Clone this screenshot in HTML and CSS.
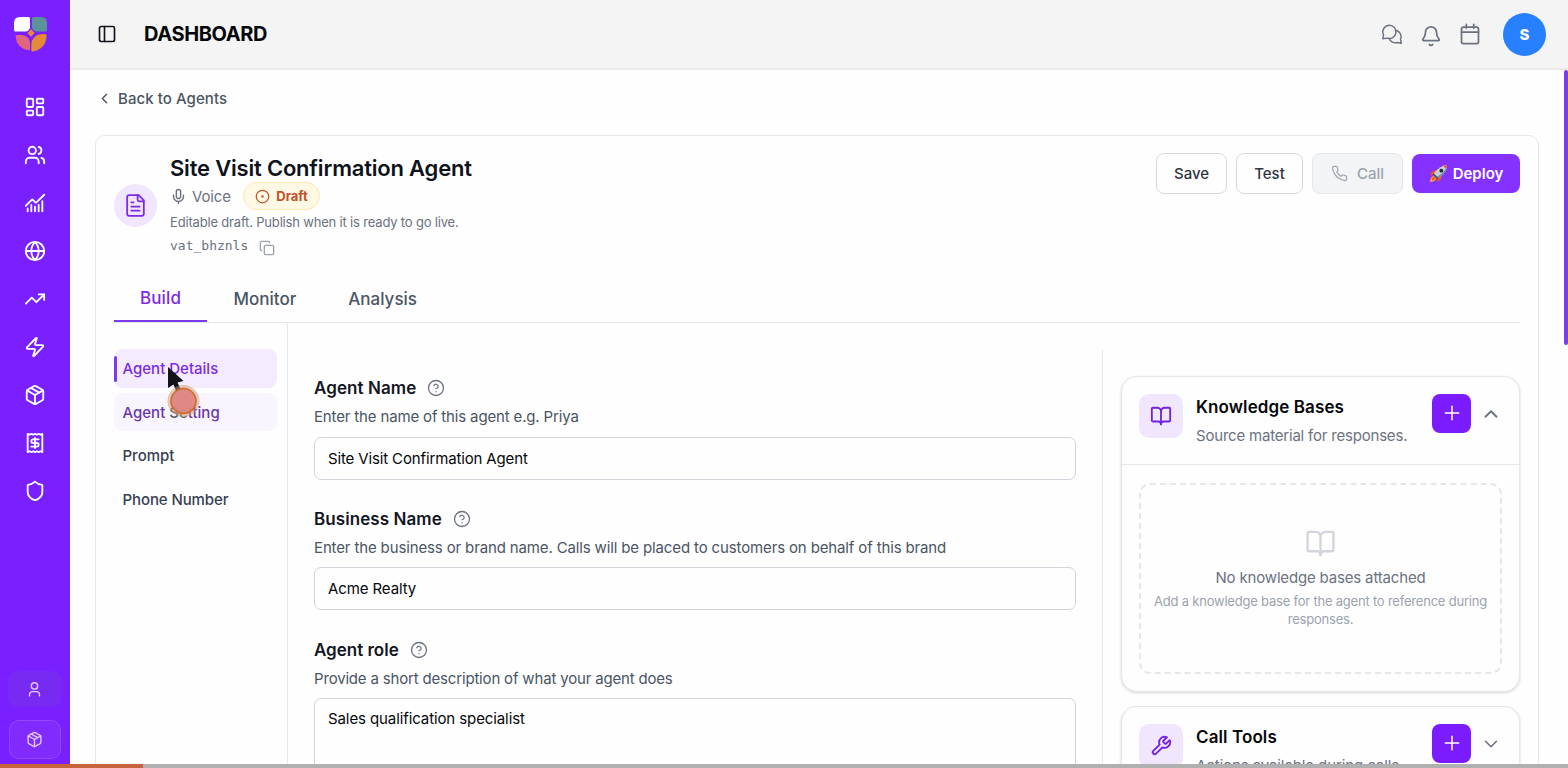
FILE: index.html
```html
<!DOCTYPE html>
<html lang="en">
<head>
<meta charset="utf-8">
<title>Dashboard</title>
<link rel="stylesheet" href="styles.css">
</head>
<body>
<svg class="defs" width="0" height="0" aria-hidden="true">
  <symbol id="box" viewBox="0 0 24 24"><path d="M11 21.73a2 2 0 0 0 2 0l7-4A2 2 0 0 0 21 16V8a2 2 0 0 0-1-1.73l-7-4a2 2 0 0 0-2 0l-7 4A2 2 0 0 0 3 8v8a2 2 0 0 0 1 1.73z"/><path d="M12 22V12"/><path d="M3.3 7 12 12l8.7-5"/><path d="m7.5 4.27 9 5.15"/></symbol>
  <symbol id="book" viewBox="0 0 24 24"><path d="M12 7v14"/><path d="M3 18a1 1 0 0 1-1-1V4a1 1 0 0 1 1-1h5a4 4 0 0 1 4 4 4 4 0 0 1 4-4h5a1 1 0 0 1 1 1v13a1 1 0 0 1-1 1h-6a3 3 0 0 0-3 3 3 3 0 0 0-3-3z"/></symbol>
  <symbol id="help" viewBox="0 0 24 24"><circle cx="12" cy="12" r="10"/><path d="M9.09 9a3 3 0 0 1 5.83 1c0 2-3 3-3 3"/><path d="M12 17h.01"/></symbol>
  <symbol id="plus" viewBox="0 0 24 24"><path d="M4 12h16M12 4v16"/></symbol>
</svg>
<div class="app">
  <aside class="sidebar">
    <svg class="logo" viewBox="0 0 34 36">
      <path fill="#fff" d="M6 0H14.500Q16 0 16 1.500V10Q16 14.500 11.500 14.500H1.500Q0 14.500 0 13V6Q0 0 6 0Z"/>
      <path fill="#5b9298" d="M19.500 0H27Q33 0 33 6V13Q33 14.500 31.500 14.500H22.500Q18 14.500 18 10V1.500Q18 0 19.500 0Z"/>
      <path fill="#e2657f" d="M3 18H8Q15.500 19 16 26V32Q16 33.500 14.500 33.300Q2.500 31 1.600 19.500Q1.600 18 3 18Z"/>
      <path fill="#e58b36" d="M31 17H28Q17.500 18 17.300 28V33Q17.300 34.700 19 34.400Q32 32 32.600 18.500Q32.600 17 31 17Z"/>
      <path fill="#e58b36" stroke="#7a1fff" stroke-width="1.200" d="M17 11.300 21.500 16 17 20.700 12.500 16Z"/>
    </svg>
    <nav class="side-nav">
      <svg class="icon" viewBox="0 0 24 24"><rect width="7" height="9" x="3" y="3" rx="1"/><rect width="7" height="5" x="14" y="3" rx="1"/><rect width="7" height="9" x="14" y="12" rx="1"/><rect width="7" height="5" x="3" y="16" rx="1"/></svg>
      <svg class="icon" viewBox="0 0 24 24"><path d="M16 21v-2a4 4 0 0 0-4-4H6a4 4 0 0 0-4 4v2"/><circle cx="9" cy="7" r="4"/><path d="M22 21v-2a4 4 0 0 0-3-3.870"/><path d="M16 3.130a4 4 0 0 1 0 7.750"/></svg>
      <svg class="icon" viewBox="0 0 24 24"><path d="M12 16v5M16 14v7M20 10v11M8 14v7M4 18v3"/><path d="m22 3-8.650 8.650a.5.5 0 0 1-.7 0L9.350 8.350a.5.5 0 0 0-.7 0L2 15"/></svg>
      <svg class="icon" viewBox="0 0 24 24"><circle cx="12" cy="12" r="10"/><path d="M12 2a14.500 14.500 0 0 0 0 20 14.500 14.500 0 0 0 0-20"/><path d="M2 12h20"/></svg>
      <svg class="icon" viewBox="0 0 24 24"><path d="M22 7 13.500 15.500 8.500 10.500 2 17"/><path d="M16 7h6v6"/></svg>
      <svg class="icon" viewBox="0 0 24 24"><path d="M4 14a1 1 0 0 1-.78-1.630l9.900-10.200a.5.5 0 0 1 .86.46l-1.920 6.020A1 1 0 0 0 13 10h7a1 1 0 0 1 .78 1.630l-9.900 10.200a.5.5 0 0 1-.86-.46l1.920-6.020A1 1 0 0 0 11 14z"/></svg>
      <svg class="icon"><use href="#box"/></svg>
      <svg class="icon" viewBox="0 0 24 24"><path d="M4 2v20l2-1 2 1 2-1 2 1 2-1 2 1 2-1 2 1V2l-2 1-2-1-2 1-2-1-2 1-2-1-2 1Z"/><path d="M16 8h-6a2 2 0 1 0 0 4h4a2 2 0 1 1 0 4H8"/><path d="M12 17.500v-11"/></svg>
      <svg class="icon" viewBox="0 0 24 24"><path d="M20 13c0 5-3.500 7.500-7.660 8.950a1 1 0 0 1-.67-.01C7.500 20.500 4 18 4 13V6a1 1 0 0 1 1-1c2 0 4.500-1.200 6.240-2.720a1.170 1.170 0 0 1 1.520 0C14.510 3.810 17 5 19 5a1 1 0 0 1 1 1z"/></svg>
    </nav>
    <div class="side-foot">
      <div class="foot-btn user"><svg class="icon" viewBox="0 0 24 24"><circle cx="12" cy="7" r="4.500"/><path d="M19 21v-2a4 4 0 0 0-4-4H9a4 4 0 0 0-4 4v2"/></svg></div>
      <div class="foot-btn boxed"><svg class="icon"><use href="#box"/></svg></div>
    </div>
  </aside>
  <div class="main">
    <header class="topbar">
      <svg class="icon panel" viewBox="0 0 24 24"><rect width="18" height="18" x="3" y="3" rx="2"/><path d="M9 3v18"/></svg>
      <h1>DASHBOARD</h1>
      <div class="top-actions">
        <svg class="icon chat" viewBox="0 0 24 24"><path d="M9.200 2.500a7.200 7.200 0 1 1-2.400 14L2 17.200l.8-4.200A7.200 7.200 0 0 1 9.200 2.500Z"/><path d="M17 8.200a7.200 7.200 0 0 1 4.300 9.600l.9 4.200-4.700-.8A7.200 7.200 0 0 1 8.800 17"/></svg>
        <svg class="icon bell" viewBox="0 0 24 24"><path d="M10.270 21.300a2 2 0 0 0 3.460 0"/><path d="M3.260 15.330A1 1 0 0 0 4 17h16a1 1 0 0 0 .74-1.670C19.410 13.960 18 12.500 18 8A6 6 0 0 0 6 8c0 4.500-1.410 5.960-2.740 7.330"/></svg>
        <svg class="icon cal" viewBox="0 0 24 24"><path d="M8 1.500v4M16 1.500v4"/><rect width="18.500" height="18" x="2.750" y="4.500" rx="2"/><path d="M2.750 10h18.500"/></svg>
        <div class="avatar">S</div>
      </div>
    </header>
    <div class="content">
      <a class="back"><svg class="icon" viewBox="0 0 24 24"><path d="m15 18-6-6 6-6"/></svg><span>Back to Agents</span></a>
      <section class="card">
        <div class="agent-head">
          <div class="agent-icon"><svg class="icon" viewBox="0 0 24 24"><path d="M15 2H6a2 2 0 0 0-2 2v16a2 2 0 0 0 2 2h12a2 2 0 0 0 2-2V7z"/><path d="M14 2v4a2 2 0 0 0 2 2h4M10 9H8M16 13H8M16 17H8"/></svg></div>
          <div class="agent-info">
            <h2>Site Visit Confirmation Agent</h2>
            <div class="meta">
              <svg class="icon mic" viewBox="0 0 24 24"><path d="M12 19v3M19 10v2a7 7 0 0 1-14 0v-2"/><rect x="9" y="2" width="6" height="13" rx="3"/></svg>
              <span class="voice">Voice</span>
              <span class="draft"><svg class="icon" viewBox="0 0 24 24"><circle cx="12" cy="12" r="10"/><circle cx="12" cy="12" r="1"/></svg><span>Draft</span></span>
            </div>
            <p class="status">Editable draft. Publish when it is ready to go live.</p>
            <div class="agent-id"><code>vat_bhznls</code><svg class="icon" viewBox="0 0 24 24"><rect width="14" height="14" x="8" y="8" rx="2"/><path d="M4 16c-1.100 0-2-.9-2-2V4c0-1.100.9-2 2-2h10c1.100 0 2 .9 2 2"/></svg></div>
          </div>
          <div class="actions">
            <button class="btn save">Save</button>
            <button class="btn test">Test</button>
            <button class="btn call"><svg class="icon" viewBox="0 0 24 24"><path d="M22 16.920v3a2 2 0 0 1-2.180 2 19.800 19.800 0 0 1-8.630-3.070 19.500 19.500 0 0 1-6-6 19.800 19.800 0 0 1-3.070-8.670A2 2 0 0 1 4.110 2h3a2 2 0 0 1 2 1.720 12.800 12.800 0 0 0 .7 2.810 2 2 0 0 1-.45 2.110L8.090 9.910a16 16 0 0 0 6 6l1.270-1.270a2 2 0 0 1 2.110-.45 12.800 12.800 0 0 0 2.810.7A2 2 0 0 1 22 16.920z"/></svg><span>Call</span></button>
            <button class="btn deploy">
              <svg class="rocket" viewBox="0 0 20 20">
                <path fill="#e8502e" d="M8 6 3 8 1 12l5-1ZM14 12l-2 5-4 2 1-5Z"/>
                <path fill="#f6a63a" d="M5 12Q1 14 1 19 6 19 8 15Z"/>
                <path fill="#e8502e" d="M5 13Q3 15 3 17 5 17 7 15Z"/>
                <path fill="#c8d0d6" d="M19 1Q12 1 5 10l5 5Q19 9 19 1Z"/>
                <path fill="#7c8b96" d="M19 1Q18 8 8.500 13.500L10 15Q19 9 19 1Z"/>
                <path fill="#e8502e" d="M19 1 15 2l3 3Z"/>
                <circle cx="13" cy="7" r="2" fill="#20303c"/>
                <path fill="#454f57" d="m5 10 5 5-1 1-5-5Z"/>
              </svg><span>Deploy</span></button>
          </div>
        </div>
        <div class="tabs">
          <div class="tab active"><span>Build</span></div>
          <div class="tab"><span>Monitor</span></div>
          <div class="tab"><span>Analysis</span></div>
        </div>
        <div class="body">
          <nav class="subnav">
            <a class="active"><span>Agent Details</span></a>
            <a class="hover"><span>Agent <i>Se</i>tting</span></a>
            <a><span>Prompt</span></a>
            <a><span class="phone">Phone Number</span></a>
          </nav>
          <div class="form">
            <div class="field">
              <label><span class="l1">Agent Name</span><svg class="icon"><use href="#help"/></svg></label>
              <p class="d1">Enter the name of this agent e.g. Priya</p>
              <div class="input"><span class="v1">Site Visit Confirmation Agent</span></div>
            </div>
            <div class="field">
              <label><span class="l2">Business Name</span><svg class="icon"><use href="#help"/></svg></label>
              <p class="d2">Enter the business or brand name. Calls will be placed to customers on behalf of this brand</p>
              <div class="input"><span class="v2">Acme Realty</span></div>
            </div>
            <div class="field">
              <label><span class="l3">Agent role</span><svg class="icon"><use href="#help"/></svg></label>
              <p class="d3">Provide a short description of what your agent does</p>
              <div class="input area"><span class="v3">Sales qualification specialist</span></div>
            </div>
          </div>
          <div class="panels">
            <section class="panel-card">
              <div class="panel-head ruled">
                <div class="panel-icon"><svg class="icon"><use href="#book"/></svg></div>
                <div class="panel-text"><h3 class="kb">Knowledge Bases</h3><p class="kbd">Source material for responses.</p></div>
                <button class="add"><svg class="icon"><use href="#plus"/></svg></button>
                <svg class="icon chev" viewBox="0 0 24 24"><path d="m18 15-6-6-6 6"/></svg>
              </div>
              <div class="empty">
                <svg class="icon"><use href="#book"/></svg>
                <p class="e1">No knowledge bases attached</p>
                <p class="e2">Add a knowledge base for the agent to reference during<br>responses.</p>
              </div>
            </section>
            <section class="panel-card">
              <div class="panel-head">
                <div class="panel-icon"><svg class="icon" viewBox="0 0 24 24"><path d="M14.700 6.300a1 1 0 0 0 0 1.400l1.600 1.600a1 1 0 0 0 1.400 0l3.770-3.770a6 6 0 0 1-7.940 7.940l-6.910 6.910a2.120 2.120 0 0 1-3-3l6.910-6.910a6 6 0 0 1 7.940-7.940l-3.760 3.760z"/></svg></div>
                <div class="panel-text"><h3 class="ct">Call Tools</h3><p class="ctd">Actions available during calls.</p></div>
                <button class="add"><svg class="icon"><use href="#plus"/></svg></button>
                <svg class="icon chev thin" viewBox="0 0 24 24"><path d="m6 9 6 6 6-6"/></svg>
              </div>
            </section>
          </div>
        </div>
      </section>
    </div>
  </div>
</div>
<div class="scrollbar"></div>
<svg class="pointer" viewBox="0 0 40 56">
  <path d="M4 3V24L9.500 20.500 12.500 28 17 26 13.500 18.500 19.500 17Z" fill="#111318"/>
  <circle cx="19.500" cy="37" r="16" fill="#c99b6b" fill-opacity=".5"/>
  <circle cx="19.500" cy="37" r="12.500" fill="#dc8480" fill-opacity=".92" stroke="#d4662b" stroke-width="1.500"/>
</svg>
<div class="progress"><div class="progress-fill"></div></div>
</body>
</html>
```
FILE: styles.css
```css
* { box-sizing: border-box; }
body { margin: 0; height: 768px; overflow: hidden; background: #fefefe; font-family: Inter, "Liberation Sans", sans-serif; font-size: 15px; color: #14161f; }
h1, h2, h3, p { margin: 0; font-weight: inherit; white-space: nowrap; }
button { font: inherit; padding: 0; }
.defs { position: absolute; }
.icon { display: block; flex: none; fill: none; stroke: currentColor; stroke-width: 2; stroke-linecap: round; stroke-linejoin: round; }
.app { display: flex; height: 768px; overflow: hidden; }

.sidebar { flex: none; width: 70px; height: 768px; background: #7a1fff; color: #fff; display: flex; flex-direction: column; align-items: center; padding-top: 17px; }
.logo { width: 34px; height: 36px; margin-left: -8px; flex: none; }
.side-nav { display: flex; flex-direction: column; gap: 25.950px; margin-top: 43px; }
.side-nav .icon { width: 22px; height: 22px; }
.side-foot { margin-top: auto; padding-bottom: 9px; display: flex; flex-direction: column; gap: 13px; }
.foot-btn { width: 54px; height: 36px; border-radius: 10px; display: flex; align-items: center; justify-content: center; color: #e0c6ff; background: #782af3; }
.foot-btn.boxed { width: 52px; height: 39px; margin-left: 1px; background: #812bff; border: 1px solid #9449ff; }
.foot-btn .icon { width: 17px; height: 17px; margin-right: 1px; }

.main { flex: 1; min-width: 0; display: flex; flex-direction: column; }
.topbar { flex: none; height: 70px; background: #f4f4f4; border-bottom: 2px solid #ebebeb; display: flex; align-items: center; padding: 0 22px 0 27px; }
.panel { width: 20px; height: 20px; color: #14161f; }
h1 { margin-left: 27px; font-size: 20px; font-weight: 700; color: #06070a; letter-spacing: -.4px; }
.top-actions { margin-left: auto; display: flex; align-items: center; color: #6b7280; }
.chat { width: 22px; height: 22px; stroke-width: 1.6; margin: 0 17.500px 0 0; }
.bell { width: 22px; height: 22px; margin: 3px 17px 0 0; stroke-width: 1.9; }
.cal { width: 22px; height: 22px; stroke-width: 1.9; margin-right: 22px; }
.avatar { width: 43px; height: 43px; border-radius: 50%; background: #2680ff; color: #fff; font-size: 15px; font-weight: 800; display: flex; align-items: center; justify-content: center; }

.content { flex: 1; min-height: 0; padding: 17px 29px 0 25px; }
.back { display: flex; align-items: center; height: 22px; color: #4b5563; font-weight: 500; font-size: 15px; letter-spacing: .07px; padding-left: 1px; }
.back .icon { width: 17px; height: 17px; margin-right: 5px; }
.card { margin-top: 25.500px; height: 660px; border: 1px solid #e5e7eb; border-radius: 10px; padding: 17px 18px 0; background: #fefefe; }
.agent-head { display: flex; height: 123px; }
.agent-icon { width: 43px; height: 43px; border-radius: 50%; background: #f0e6fe; color: #7c2ae8; display: flex; align-items: center; justify-content: center; margin: 31px 13px 0 0; flex: none; }
.agent-icon .icon { width: 25px; height: 25px; stroke-width: 1.7; }
h2 { font-size: 22px; line-height: 30px; font-weight: 600; color: #0f121b; letter-spacing: -.2px; }
.meta { display: flex; align-items: center; height: 27px; color: #6b7280; }
.mic { width: 17px; height: 17px; margin-right: 5px; }
.voice { font-size: 15px; letter-spacing: -.15px; }
.draft { display: flex; align-items: center; width: 77px; height: 28px; padding-left: 11px; margin-left: 12.500px; gap: 6px; border-radius: 14px; background: #fef9e4; border: 1px solid #fbe9b0; color: #c4512b; font-size: 13px; font-weight: 700; }
.draft .icon { width: 15px; height: 15px; }
.status { font-size: 13px; line-height: 24px; color: #6b7280; letter-spacing: -.178px; }
.agent-id { display: flex; align-items: center; height: 24px; color: #6b7280; }
.agent-id code { font: 13px/20px "DejaVu Sans Mono", monospace; }
.agent-id .icon { width: 16px; height: 16px; margin: 4px 0 0 10.500px; color: #9ca3af; }
.actions { margin: 0 0 0 auto; display: flex; gap: 9px; align-items: flex-start; }
.btn { height: 41px; display: flex; align-items: center; justify-content: center; border: 1px solid #d6d8dd; border-radius: 8px; background: #fefefe; color: #303540; font-weight: 500; font-size: 15px; }
.save { width: 71px; }
.test { width: 67px; }
.call { width: 91px; background: #f3f4f6; border-color: #e5e7eb; color: #9ca3af; gap: 9px; }
.call .icon { width: 17px; height: 17px; stroke-width: 1.7; }
.deploy { width: 108px; height: 39px; margin-top: 1px; background: #8632ff; border: 0; color: #fff; gap: 5px; font-weight: 600; }
.rocket { width: 19px; height: 19px; }

.tabs { display: flex; height: 47px; border-bottom: 1px solid #e5e7eb; color: #4b5563; font-size: 17px; font-weight: 500; }
.tab { height: 47px; padding: 0 26px; line-height: 47px; display: flex; justify-content: center; }
.tab.active { width: 93px; height: 46px; line-height: 45px; color: #7c2ae8; border-bottom: 2px solid #7c3aed; letter-spacing: .15px; }
.tab.active + .tab { padding-left: 26.500px; }

.body { display: flex; height: 500px; padding-top: .5px; }
.subnav { width: 174px; margin-left: -.5px; padding: 26px 10px 0 0; border-right: 1px solid #e5e7eb; display: flex; flex-direction: column; gap: 5px; flex: none; }
.subnav a { position: relative; display: flex; align-items: center; flex: none; height: 38.700px; padding-left: 9px; border-radius: 8px; font-size: 15px; font-weight: 500; color: #374151; white-space: nowrap; }
.subnav .active { background: #f4ecfe; color: #7c2ae8; }
.subnav .active::before { content: ""; position: absolute; left: 0; top: 7px; width: 3px; height: 26px; border-radius: 2px; background: #7c3aed; }
.subnav .hover { background: #f9f5fe; color: #6a36ad; }
.subnav i { font-style: normal; color: #4b5563; }
.phone { letter-spacing: -.1px; }

.form { flex: 1; min-width: 0; padding: 51px 26px 0 26.500px; }
.field { height: 130.800px; }
.field label { display: flex; align-items: center; height: 28px; font-size: 17px; font-weight: 600; color: #14161f; }
.field label .icon { width: 18px; height: 18px; margin-left: 11px; stroke-width: 1.7; color: #6b7280; }
.field p { height: 30px; line-height: 30px; color: #4b5563; }
.l1 { letter-spacing: .08px; }
.l2 { letter-spacing: .08px; }
.d1 { letter-spacing: -.155px; }
.d2 { letter-spacing: -.138px; }
.d3 { letter-spacing: -.176px; }
.v1 { letter-spacing: -.14px; }
.v2 { letter-spacing: -.1px; }
.v3 { letter-spacing: -.1px; }
.input { height: 43px; margin-top: 4.500px; border: 1px solid #d1d5db; border-radius: 7px; padding: 0 13px; display: flex; align-items: center; color: #06070a; white-space: nowrap; }
.input.area { height: 110px; align-items: flex-start; padding-top: 10px; }

.panels { width: 418px; height: 480px; margin-top: 26px; padding: 26.500px 0 0 18px; border-left: 1px solid #e5e7eb; flex: none; }
.panel-card { width: 399px; border: 1px solid #e5e7eb; border-radius: 16px; box-shadow: 0 1px 3px rgba(0,0,0,.16); background: #fefefe; margin-bottom: 14px; height: 316px; }
.panel-head { display: flex; height: 88px; padding: 17px 17px 0; }
.panel-head.ruled { border-bottom: 1px solid #e5e7eb; }
.panel-icon { width: 44px; height: 44px; border-radius: 10px; background: #f0e6fe; color: #7420e6; display: flex; align-items: center; justify-content: center; flex: none; }
.panel-icon .icon { width: 22px; height: 22px; }
.panel-text { margin-left: 13px; flex: 1; min-width: 0; }
h3 { font-size: 17px; line-height: 27px; font-weight: 600; color: #06070a; letter-spacing: .1px; }
.panel-text p { font-size: 15px; line-height: 30px; color: #6b7280; letter-spacing: -.2px; }
.panel-text .ctd { letter-spacing: -.1px; }
.add { width: 39px; height: 39px; border: 0; border-radius: 8px; background: #7a1cff; color: #fff; display: flex; align-items: center; justify-content: center; }
.add .icon { width: 20px; height: 20px; stroke-width: 1.8; }
.chev { width: 22px; height: 22px; color: #6b7280; margin: 9px 0 0 9px; }
.chev.thin { stroke-width: 1.7; }
.empty { height: 191px; margin: 18px 17px 0; border: 2px dashed #e5e7eb; border-radius: 11px; display: flex; flex-direction: column; align-items: center; text-align: center; padding-top: 43px; }
.empty .icon { width: 31px; height: 31px; color: #d1d5db; stroke-width: 1.8; }
.e1 { font-size: 15px; line-height: 24px; color: #6b7280; margin-top: 7px; letter-spacing: -.17px; }
.e2 { font-size: 13px; line-height: 18px; color: #9ca3af; margin-top: 2.500px; letter-spacing: -.21px; }

.scrollbar { position: absolute; right: 0; top: 70px; width: 4px; height: 275px; border-radius: 3px; background: #7c3fe0; }
.pointer { position: absolute; left: 163.500px; top: 364px; width: 40px; height: 56px; }
.progress { position: absolute; left: 0; bottom: 0; width: 1568px; height: 4px; background: #b0b0b0; }
.progress-fill { width: 143px; height: 4px; background: #c6643e; }
```
